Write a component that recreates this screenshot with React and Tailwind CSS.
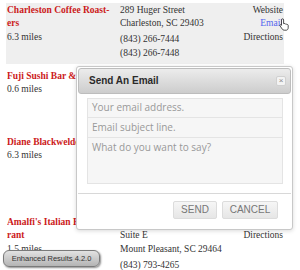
import React from "react";

function Line({ children, className = "" }) {
  return <div className={`h-[13.5px] whitespace-nowrap ${className}`}>{children}</div>;
}

function Row({ gray, h, name, miles, addr, phones, links }) {
  return (
    <div className={`flex mb-[5px] pt-[0.5px] ${h} ${gray ? "bg-[#efefef]" : ""}`}>
      <div className="w-[114px] shrink-0 pl-[1px]">
        <div className="font-bold text-[#cc1a1a]">{name}</div>
        <div>{miles}</div>
      </div>
      <div className="flex-1">
        {addr.map((a, i) => (
          <Line key={i}>{a}</Line>
        ))}
        <div className="mt-[2.5px]">
          {phones.map((p, i) => (
            <Line key={i}>{p}</Line>
          ))}
        </div>
      </div>
      <div className="text-right pr-[1px]">
        {links.map((l, i) => (
          <Line key={i} className={l === "Email" ? "text-[#5566ee]" : ""}>{l}</Line>
        ))}
      </div>
    </div>
  );
}

export default function App() {
  return (
    <div className="relative w-[300px] h-[270px] overflow-hidden bg-white font-['Liberation_Serif',serif] text-[9.5px] leading-[13.5px] text-[#333]">
      <div className="pl-[6px] w-[284px] pt-[3px]">
        <Row
          gray
          h="h-[61px]"
          name={<>Charleston Coffee Roast-<br />ers</>}
          miles="6.3 miles"
          addr={["289 Huger Street", "Charleston, SC 29403"]}
          phones={["(843) 266-7444", "(843) 266-7448"]}
          links={["Website", "Email", "Directions"]}
        />
        <Row
          h="h-[61px]"
          name={<div className="w-[70px] overflow-hidden whitespace-nowrap">Fuji Sushi Bar &amp; Grill</div>}
          miles="0.6 miles"
          addr={[]}
          phones={[]}
          links={[]}
        />
        <Row
          h="h-[75px]"
          name={<div className="w-[70px] overflow-hidden whitespace-nowrap">Diane Blackwelder</div>}
          miles="6.3 miles"
          addr={[]}
          phones={[]}
          links={[]}
        />
        <Row
          h="h-[60px]"
          name={<><div className="w-[70px] overflow-hidden whitespace-nowrap">Amalfi's Italian Restau-</div>rant</>}
          miles="1.5 miles"
          addr={["", "Suite E", "Mount Pleasant, SC 29464"]}
          phones={["(843) 793-4265"]}
          links={["", "Directions"]}
        />
      </div>

      {/* cursor */}
      <svg className="absolute left-[279px] top-[18px]" width="11" height="13" viewBox="0 0 11 13">
        <path
          d="M3.5 0.8 C4.3 0.8 4.6 1.3 4.6 2 V5.6 L5.2 5.5 C5.9 5.4 6.3 5.7 6.4 6.1 C7 5.8 7.6 6 7.8 6.5 C8.4 6.3 9.1 6.6 9.2 7.3 V9.8 C9.2 11 8.5 12 7.4 12.2 H5.2 C4.3 12.2 3.8 11.8 3.3 11.1 L1.1 8 C0.7 7.4 1 6.7 1.7 6.7 C2.1 6.7 2.4 7 2.5 7.3 V2 C2.5 1.3 2.8 0.8 3.5 0.8 Z"
          fill="#fff"
          stroke="#222"
          strokeWidth="0.8"
        />
      </svg>

      {/* modal */}
      <div className="absolute left-[76px] top-[66px] w-[217px] h-[164px] bg-white border border-[#c8c8c8] rounded-[3px] shadow-[0_1px_4px_rgba(0,0,0,0.15)] p-[1px] flex flex-col font-['Liberation_Sans',Arial,sans-serif]">
        <div className="h-[26px] shrink-0 rounded-[3px] border border-[#bdbdbd] bg-gradient-to-b from-[#ececec] to-[#cdcdcd] flex items-center justify-between pl-[10px] pr-[4px]">
          <span className="font-bold text-[10px] text-[#2a2a2a]">Send An Email</span>
          <span className="w-[10px] h-[10px] border border-[#d0d0d0] bg-[#f3f3f3] rounded-[2px] flex items-center justify-center text-[8px] leading-none text-[#888]">×</span>
        </div>
        <div className="mt-[4px] ml-[9px] w-[196px] flex flex-col font-['Open_Sans',sans-serif] text-[10px] text-[#999]">
          <div className="h-[20px] border border-[#e4e4e4] bg-[#f6f6f6] flex items-center pl-[4px]">Your email address.</div>
          <div className="h-[20px] border border-t-0 border-[#e4e4e4] bg-[#f6f6f6] flex items-center pl-[4px]">Email subject line.</div>
          <div className="h-[46px] border border-t-0 border-[#e4e4e4] bg-[#f6f6f6] pl-[4px] pt-[3px]">What do you want to say?</div>
        </div>
        <div className="mt-[9px] border-t border-[#d8d8d8] flex justify-end gap-[5px] pt-[7px] pr-[13px]">
          <div className="w-[44px] h-[18px] border border-[#dcdcdc] rounded-[2px] bg-gradient-to-b from-[#f6f6f6] to-[#e6e6e6] flex items-center justify-center text-[10px] text-[#777]">SEND</div>
          <div className="w-[56px] h-[18px] border border-[#dcdcdc] rounded-[2px] bg-gradient-to-b from-[#f6f6f6] to-[#e6e6e6] flex items-center justify-center text-[10px] text-[#777]">CANCEL</div>
        </div>
      </div>

      {/* badge */}
      <div className="absolute left-[3px] top-[250px] w-[97px] h-[17px] rounded-[6px] border border-[#7a7a7a] bg-gradient-to-b from-[#e2e2e2] to-[#b4b4b4] shadow-[1px_1px_2px_rgba(0,0,0,0.45)] flex items-center justify-center font-['Liberation_Sans',Arial,sans-serif] text-[7.5px] text-[#333]">
        Enhanced Results 4.2.0
      </div>
    </div>
  );
}
